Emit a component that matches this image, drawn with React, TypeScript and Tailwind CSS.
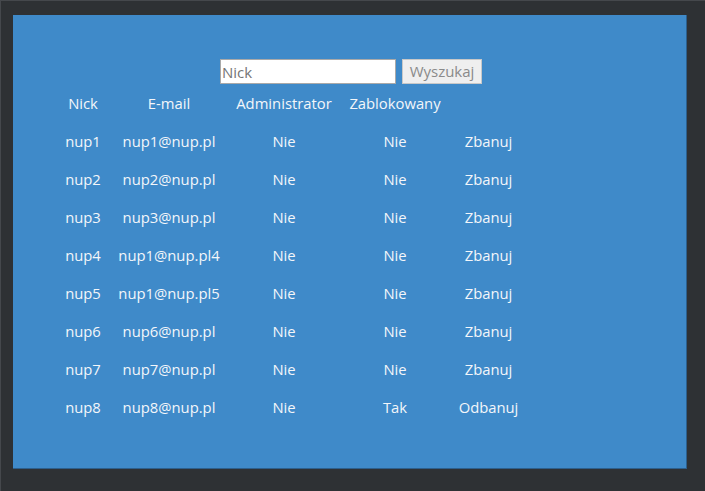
import React from 'react';

interface User {
  nick: string;
  email: string;
  admin: boolean;
  blocked: boolean;
}

const users: User[] = [
  { nick: 'nup1', email: 'nup1@nup.pl', admin: false, blocked: false },
  { nick: 'nup2', email: 'nup2@nup.pl', admin: false, blocked: false },
  { nick: 'nup3', email: 'nup3@nup.pl', admin: false, blocked: false },
  { nick: 'nup4', email: 'nup1@nup.pl4', admin: false, blocked: false },
  { nick: 'nup5', email: 'nup1@nup.pl5', admin: false, blocked: false },
  { nick: 'nup6', email: 'nup6@nup.pl', admin: false, blocked: false },
  { nick: 'nup7', email: 'nup7@nup.pl', admin: false, blocked: false },
  { nick: 'nup8', email: 'nup8@nup.pl', admin: false, blocked: true },
];

const cols = 'grid grid-cols-[54px_118px_112px_110px_77px] h-[38px] items-center text-center';

const App: React.FC = () => {
  return (
    <div
      className="w-[705px] h-[491px] bg-[#2e3134] pl-[13px] pt-[15px] border-l border-t border-[#45484c]"
      style={{ fontFamily: '"Open Sans", "Liberation Sans", sans-serif' }}
    >
      <div className="w-[674px] h-[454px] bg-[#3f8ac9] border-r border-b border-[#2d5f8c] -ml-px -mt-px">
        <form className="flex justify-center gap-[6px] pt-[44px] pl-[3px]" onSubmit={e => e.preventDefault()}>
          <input
            type="text"
            placeholder="Nick"
            className="w-[176px] h-[25px] bg-white border border-[#a9a9a9] px-px text-[15px] text-[#333] placeholder:text-[#757575] outline-none"
          />
          <button
            type="submit"
            className="w-[80px] h-[25px] bg-[#efefef] border border-[#c8c8c8] text-[15px] text-[#8a8a8a] leading-none"
          >
            Wyszukaj
          </button>
        </form>

        <div className="ml-[43px] text-[14.8px] text-[#f3f6fa]">
          <div className={cols}>
            <div>Nick</div>
            <div>E-mail</div>
            <div>Administrator</div>
            <div>Zablokowany</div>
            <div></div>
          </div>
          {users.map(u => (
            <div key={u.nick} className={cols}>
              <div>{u.nick}</div>
              <div>{u.email}</div>
              <div>{u.admin ? 'Tak' : 'Nie'}</div>
              <div>{u.blocked ? 'Tak' : 'Nie'}</div>
              <div>{u.blocked ? 'Odbanuj' : 'Zbanuj'}</div>
            </div>
          ))}
        </div>
      </div>
    </div>
  );
};

export default App;
